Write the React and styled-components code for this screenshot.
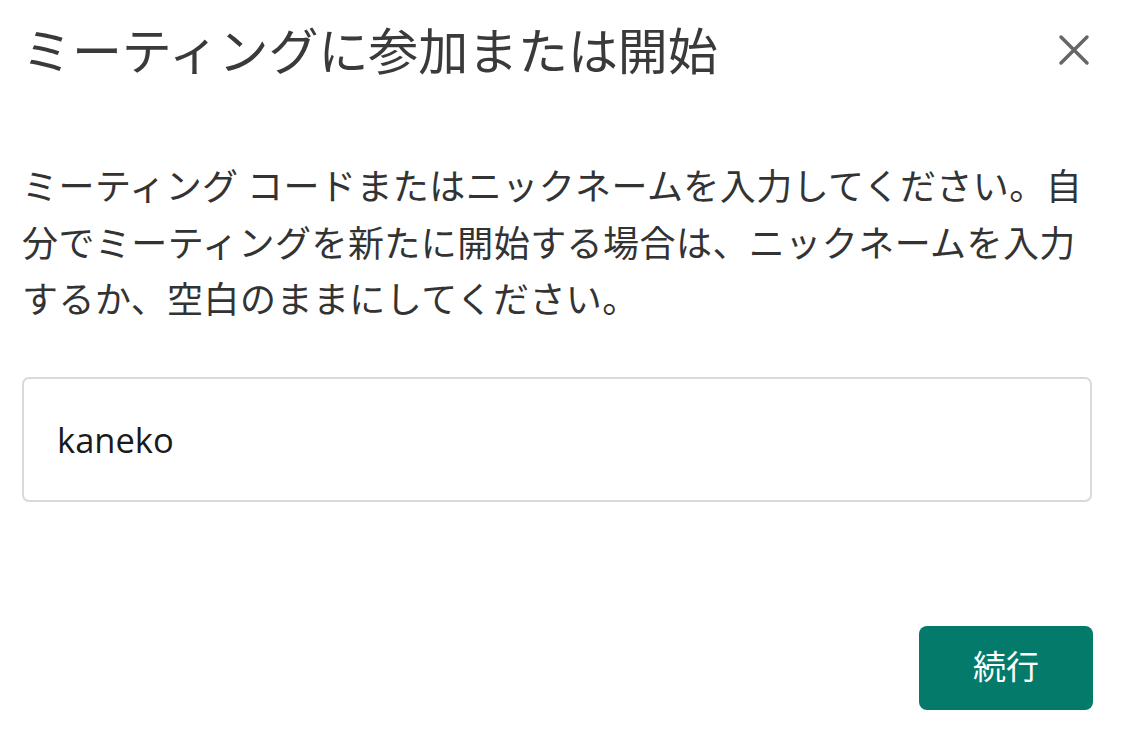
import React from "react";
import styled, { createGlobalStyle } from "styled-components";

const Global = createGlobalStyle`
  html, body { margin: 0; padding: 0; background: #fff; }
  body { font-family: "Noto Sans CJK JP", "Noto Sans", sans-serif; }
`;

const Dialog = styled.div`
  width: 1123px;
  height: 738px;
  box-sizing: border-box;
  padding: 0 31px 0 22px;
  display: flex;
  flex-direction: column;
  background: #fff;
`;

const Header = styled.div`
  display: flex;
  align-items: center;
  justify-content: space-between;
  height: 96px;
`;

const Title = styled.h1`
  margin: 0;
  font-size: 50px;
  font-weight: 400;
  color: #3a3a3a;
  letter-spacing: -0.1px;
  line-height: 1;
`;

const CloseButton = styled.button`
  width: 44px;
  height: 44px;
  padding: 0;
  margin-right: -4px;
  margin-top: 4px;
  border: none;
  background: transparent;
  display: flex;
  align-items: center;
  justify-content: center;
  cursor: pointer;
`;

const Body = styled.p`
  margin: 60px 0 0;
  font-size: 36px;
  line-height: 56.5px;
  color: #333;
  letter-spacing: 0.45px;
`;

const Field = styled.input`
  margin-top: 51px;
  height: 125px;
  box-sizing: border-box;
  border: 2px solid #d9d9d9;
  border-radius: 7px;
  padding: 0 33px;
  font-family: "Open Sans", "Noto Sans", sans-serif;
  font-size: 34.5px;
  color: #1a1a1a;
  outline: none;
`;

const Footer = styled.div`
  margin-top: 124px;
  display: flex;
  justify-content: flex-end;
  margin-right: -1px;
`;

const Primary = styled.button`
  width: 174px;
  height: 84px;
  padding: 0 0 6px;
  border: none;
  border-radius: 8px;
  background: #037a6a;
  color: #fff;
  font-family: "Noto Sans CJK JP", sans-serif;
  font-size: 33px;
  cursor: pointer;
`;

export default function App() {
  return (
    <>
      <Global />
      <Dialog>
        <Header>
          <Title>ミーティングに参加または開始</Title>
          <CloseButton aria-label="閉じる">
            <svg width="32" height="32" viewBox="0 0 32 32">
              <path d="M3 3 L29 29 M29 3 L3 29" stroke="#666" strokeWidth="3.5" strokeLinecap="round" />
            </svg>
          </CloseButton>
        </Header>
        <Body>
          ミーティング コードまたはニックネームを入力してください。自分でミーティングを新たに開始する場合は、ニックネームを入力するか、空白のままにしてください。
        </Body>
        <Field defaultValue="kaneko" />
        <Footer>
          <Primary>続行</Primary>
        </Footer>
      </Dialog>
    </>
  );
}
